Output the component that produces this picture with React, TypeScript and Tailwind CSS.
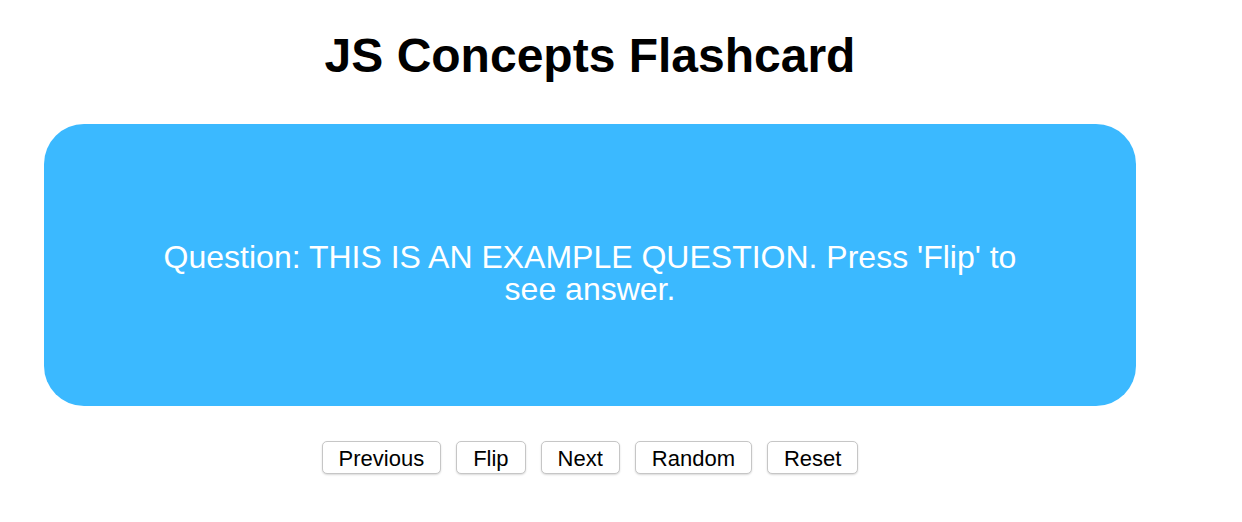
const buttons = ["Previous", "Flip", "Next", "Random", "Reset"];

export default function App() {
  return (
    <div className="min-h-[522px] w-[1242px] bg-white font-['Liberation_Sans',Arial,sans-serif] text-black">
      <div className="flex w-[1180px] flex-col items-center">
        <h1 className="mt-[28px] text-[48px] font-bold leading-[1.15]">JS Concepts Flashcard</h1>

        <div className="mx-[44px] mt-[41px] flex h-[282px] w-[1092px] items-center justify-center rounded-[40px] bg-[#3bb9ff] px-[100px] pt-[15px]">
          <p className="text-center text-[32px] leading-[32px] text-white">
            Question: THIS IS AN EXAMPLE QUESTION. Press 'Flip' to see answer.
          </p>
        </div>

        <div className="mt-[35px] flex gap-[15px]">
          {buttons.map((label) => (
            <button
              key={label}
              className="h-[33px] rounded-[5px] border border-[#c6c6c6] bg-white px-[16px] pt-[2px] text-[22px] leading-none shadow-[0_1px_2px_rgba(0,0,0,0.15)]"
            >
              {label}
            </button>
          ))}
        </div>
      </div>
    </div>
  );
}
